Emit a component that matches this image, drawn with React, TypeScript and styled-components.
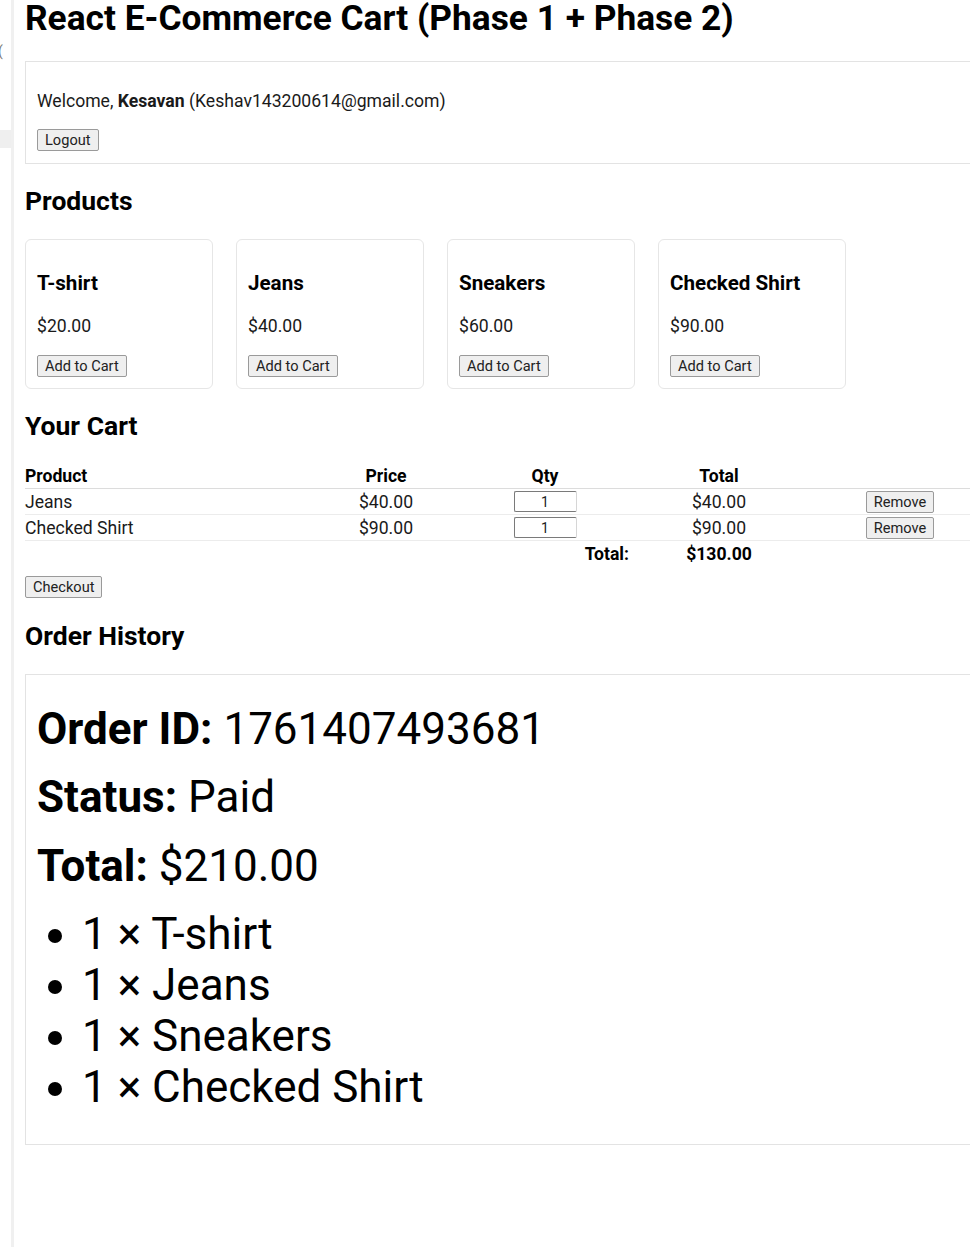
import React from "react";
import styled, { createGlobalStyle } from "styled-components";

const Global = createGlobalStyle`
  html, body { margin: 0; padding: 0; background: #fff; overflow: hidden; }
  body { font-family: Roboto, "Liberation Sans", Arial, sans-serif; color: #111; }
  input[type="number"]::-webkit-inner-spin-button,
  input[type="number"]::-webkit-outer-spin-button { -webkit-appearance: none; margin: 0; }
`;

const Page = styled.div`
  display: flex;
  align-items: stretch;
  min-height: 1247px;
  width: 1000px;
`;

const Side = styled.div`
  width: 11px;
  flex: none;
  border-right: 3px solid #f0f0f0;
  display: flex;
  flex-direction: column;
  color: #777;
  font-size: 14px;
`;

const Paren = styled.span`
  margin-top: 43px;
  line-height: 16px;
  margin-left: -2px;
`;

const SideBlock = styled.div`
  margin-top: 71px;
  height: 18px;
  background: #efefef;
`;

const Main = styled.main`
  flex: none;
  width: 970px;
  padding-left: 11px;
  display: flex;
  flex-direction: column;
  align-items: flex-start;
`;

const Title = styled.h1`
  margin: -2px 0 0;
  font-size: 35.3px;
  line-height: 40px;
  font-weight: 700;
  color: #000;
  white-space: nowrap;
`;

const Box = styled.section<{ $top: number }>`
  align-self: stretch;
  margin-top: ${(p) => p.$top}px;
  border: 1px solid #e3e3e3;
`;

const UserBox = styled(Box)`
  padding: 29px 11px 12px;
  display: flex;
  flex-direction: column;
  align-items: flex-start;
  gap: 18px;
`;

const Welcome = styled.p`
  margin: 0;
  font-size: 17.6px;
  line-height: 20px;
  color: #1a1a1a;
`;

const Btn = styled.button`
  font-family: Roboto, "Liberation Sans", Arial, sans-serif;
  font-size: 14.6px;
  line-height: 16px;
  height: 22px;
  padding: 0 7px;
  background: #efefef;
  color: #222;
  border: 1px solid #9a9a9a;
  border-radius: 2px;
`;

const H2 = styled.h2<{ $top: number }>`
  margin: ${(p) => p.$top}px 0 0;
  font-size: 26.5px;
  line-height: 28px;
  font-weight: 700;
  color: #000;
`;

const Cards = styled.div`
  margin-top: 24px;
  display: flex;
  gap: 23px;
`;

const Card = styled.div`
  width: 188px;
  height: 150px;
  box-sizing: border-box;
  border: 1px solid #e6e6e6;
  border-radius: 6px;
  padding: 31px 11px 11px;
  display: flex;
  flex-direction: column;
  align-items: flex-start;
`;

const CardTitle = styled.h3`
  margin: 0;
  font-size: 20.6px;
  line-height: 24px;
  font-weight: 700;
  color: #000;
`;

const Price = styled.p`
  margin: 21px 0 19px;
  font-size: 17.6px;
  line-height: 20px;
  color: #1a1a1a;
`;

const Table = styled.table`
  margin-top: 23px;
  width: 970px;
  table-layout: fixed;
  border-collapse: collapse;
  font-size: 17.6px;
  color: #1a1a1a;
`;

const Th = styled.th<{ $align?: string; $padRight?: number }>`
  height: 25px;
  padding: 0 ${(p) => p.$padRight || 0}px 0 0;
  text-align: ${(p) => p.$align || "center"};
  font-weight: 700;
  color: #000;
  line-height: 20px;
  border-bottom: 1px solid #dcdcdc;
`;

const Td = styled.td<{ $align?: string; $bold?: boolean; $padRight?: number }>`
  height: 25px;
  padding: 0 ${(p) => p.$padRight || 0}px 0 0;
  text-align: ${(p) => p.$align || "center"};
  font-weight: ${(p) => (p.$bold ? 700 : 400)};
  color: ${(p) => (p.$bold ? "#000" : "#1a1a1a")};
  line-height: 20px;
  vertical-align: middle;
`;

const Row = styled.tr`
  border-bottom: 1px solid #ececec;
`;

const QtyInput = styled.input`
  width: 63px;
  height: 21px;
  box-sizing: border-box;
  margin: 0;
  padding: 0 2px;
  font-family: Roboto, "Liberation Sans", Arial, sans-serif;
  font-size: 14px;
  text-align: center;
  color: #222;
  border: 1px solid #7a7a7a;
  border-right-color: #d6d6d6;
  border-radius: 2px;
  vertical-align: middle;
  -moz-appearance: textfield;
  appearance: textfield;
`;

const CheckoutWrap = styled.div`
  margin-top: 10px;
`;

const OrderBox = styled(Box)`
  padding: 28.5px 11px 0;
  height: 471px;
  box-sizing: border-box;
`;

const OrderLine = styled.p`
  margin: 0 0 17.5px;
  font-size: 44px;
  line-height: 51px;
  color: #000;
  & b { font-weight: 700; }
`;

const Items = styled.ul`
  margin: 1.5px 0 0;
  padding-left: 45px;
  font-size: 44px;
  line-height: 51px;
  color: #000;
`;

const products = [
  { name: "T-shirt", price: 20 },
  { name: "Jeans", price: 40 },
  { name: "Sneakers", price: 60 },
  { name: "Checked Shirt", price: 90 },
];

const cart = [
  { name: "Jeans", price: 40, qty: 1 },
  { name: "Checked Shirt", price: 90, qty: 1 },
];

const money = (n: number) => `$${n.toFixed(2)}`;

export default function App() {
  return (
    <>
      <Global />
      <Page>
        <Side>
          <Paren>(</Paren>
          <SideBlock />
        </Side>
        <Main>
          <Title>React E-Commerce Cart (Phase 1 + Phase 2)</Title>
          <UserBox $top={23}>
            <Welcome>
              Welcome, <b>Kesavan</b> (Keshav143200614@gmail.com)
            </Welcome>
            <Btn>Logout</Btn>
          </UserBox>

          <H2 $top={23}>Products</H2>
          <Cards>
            {products.map((p) => (
              <Card key={p.name}>
                <CardTitle>{p.name}</CardTitle>
                <Price>{money(p.price)}</Price>
                <Btn>Add to Cart</Btn>
              </Card>
            ))}
          </Cards>

          <H2 $top={23}>Your Cart</H2>
          <Table>
            <colgroup>
              <col style={{ width: 282 }} />
              <col style={{ width: 158 }} />
              <col style={{ width: 168 }} />
              <col style={{ width: 172 }} />
              <col style={{ width: 190 }} />
            </colgroup>
            <thead>
              <tr>
                <Th $align="left">Product</Th>
                <Th>Price</Th>
                <Th $padRight={8}>Qty</Th>
                <Th>Total</Th>
                <Th></Th>
              </tr>
            </thead>
            <tbody>
              {cart.map((c) => (
                <Row key={c.name}>
                  <Td $align="left">{c.name}</Td>
                  <Td>{money(c.price)}</Td>
                  <Td $padRight={8}>
                    <QtyInput type="number" defaultValue={c.qty} />
                  </Td>
                  <Td>{money(c.price * c.qty)}</Td>
                  <Td>
                    <Btn>Remove</Btn>
                  </Td>
                </Row>
              ))}
              <tr>
                <Td colSpan={3} $align="right" $bold $padRight={4}>
                  Total:
                </Td>
                <Td $bold>$130.00</Td>
                <Td></Td>
              </tr>
            </tbody>
          </Table>
          <CheckoutWrap>
            <Btn>Checkout</Btn>
          </CheckoutWrap>

          <H2 $top={24}>Order History</H2>
          <OrderBox $top={24}>
            <OrderLine>
              <b>Order ID:</b> 1761407493681
            </OrderLine>
            <OrderLine>
              <b>Status:</b> Paid
            </OrderLine>
            <OrderLine>
              <b>Total:</b> $210.00
            </OrderLine>
            <Items>
              <li>1 × T-shirt</li>
              <li>1 × Jeans</li>
              <li>1 × Sneakers</li>
              <li>1 × Checked Shirt</li>
            </Items>
          </OrderBox>
        </Main>
      </Page>
    </>
  );
}
